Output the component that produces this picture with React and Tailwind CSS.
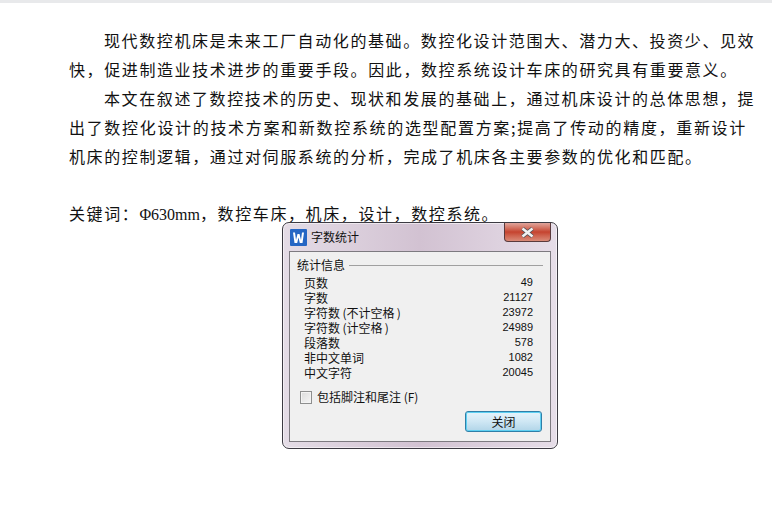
import React from "react";

const stats = [
  ["页数", "49"],
  ["字数", "21127"],
  ["字符数\u2009(不计空格\u2009)", "23972"],
  ["字符数\u2009(计空格\u2009)", "24989"],
  ["段落数", "578"],
  ["非中文单词", "1082"],
  ["中文字符", "20045"],
];

const cjk = { fontFamily: '"Noto Sans CJK SC", "Noto Sans", sans-serif' };

const WordCountDialog = () => {
  return (
    <div
      style={cjk}
      className="absolute left-[282px] top-[222px] w-[276px] h-[227px] rounded-[7px] border border-[#3c3a42] bg-gradient-to-r from-[#e4dce6] via-[#d2c2d2] to-[#e6dde8] flex flex-col px-[6px] pb-[6px] shadow-[inset_0_0_0_1px_rgba(255,255,255,0.55)]"
    >
      <div className="h-[28px] shrink-0 flex items-start">
        <svg width="17" height="17" viewBox="0 0 17 17" className="ml-[1px] mt-[6px]">
          <rect width="17" height="17" rx="1" fill="#2566c4" />
          <polygon
            points="3,3.5 5,3.5 6,11 7.5,5 9.5,5 11,11 12,3.5 14,3.5 12.5,14 9.8,14 8.5,8.5 7.2,14 4.5,14"
            fill="#ffffff"
          />
        </svg>
        <span className="ml-[4px] mt-[5px] text-[12px] leading-[17px] text-[#111]">字数统计</span>
        <button className="ml-auto w-[47px] h-[19px] rounded-b-[4px] border border-t-0 border-[#5a3a3c] bg-gradient-to-b from-[#dfa59c] via-[#c5432f] to-[#d98a78] flex items-center justify-center">
          <svg width="15" height="11" viewBox="0 0 15 11">
            <path d="M2.5 1.5 L12.5 9.5 M12.5 1.5 L2.5 9.5" stroke="#4c5058" strokeWidth="4" />
            <path d="M2.5 1.5 L12.5 9.5 M12.5 1.5 L2.5 9.5" stroke="#f2f2f2" strokeWidth="2.6" />
          </svg>
        </button>
      </div>

      <div className="flex-1 border border-[#7d7a80] bg-[#f0f0f0] pt-[5px] pl-[7px] pr-[6px] flex flex-col">
        <div className="flex items-center h-[16px]">
          <span className="text-[12px] leading-[16px] text-[#111]">统计信息</span>
          <div className="flex-1 h-[1px] ml-[4px] mr-[1px] bg-[#a0a0a0]" />
        </div>
        <div className="mt-[2px] pl-[7px] pr-[11px]">
          {stats.map(([label, value]) => (
            <div key={label} className="flex justify-between items-center h-[15px] text-[12px] leading-[15px] text-[#111]">
              <span>{label}</span>
              <span className="text-[11px]" style={{ fontFamily: '"Liberation Sans", sans-serif' }}>
                {value}
              </span>
            </div>
          ))}
        </div>
        <label className="flex items-center mt-[10px] ml-[3px] h-[14px]">
          <span className="w-[12px] h-[13px] border border-[#8e8f8f] bg-gradient-to-br from-[#dcdcdc] to-[#f6f6f6] shadow-[inset_0_0_0_1px_#f4f4f4]" />
          <span className="ml-[5px] text-[12px] leading-[14px] text-[#111]">包括脚注和尾注 (F)</span>
        </label>
        <div className="flex justify-end mt-[7px] mr-[2px]">
          <button className="w-[77px] h-[21px] rounded-[3px] border border-[#2f7fa8] bg-gradient-to-b from-[#e6f4fb] via-[#cfe7f4] to-[#b1d5e8] text-[12px] leading-[17px] text-[#111] shadow-[inset_0_0_0_1px_#5ed0f2]">
            关闭
          </button>
        </div>
      </div>
    </div>
  );
};

export default function App() {
  return (
    <div style={cjk} className="relative w-[772px] h-[514px] overflow-hidden bg-white text-[#111]">
      <div className="h-[3px] bg-[#e8e9eb]" />
      <div className="pl-[69px] pr-[15px] pt-[23px] text-[16px] leading-[29px] tracking-[1.6px] whitespace-nowrap">
        <p className="pl-[35px]">现代数控机床是未来工厂自动化的基础。数控化设计范围大、潜力大、投资少、见效</p>
        <p>快，促进制造业技术进步的重要手段。因此，数控系统设计车床的研究具有重要意义。</p>
        <p className="pl-[35px]">本文在叙述了数控技术的历史、现状和发展的基础上，通过机床设计的总体思想，提</p>
        <p className="tracking-[1.68px]">出了数控化设计的技术方案和新数控系统的选型配置方案;提高了传动的精度，重新设计</p>
        <p>机床的控制逻辑，通过对伺服系统的分析，完成了机床各主要参数的优化和匹配。</p>
        <p className="mt-[28px]">
          关键词：
          <span className="tracking-normal" style={{ fontFamily: '"Liberation Serif", serif' }}>
            Φ630mm
          </span>
          ，数控车床，机床，设计，数控系统。
        </p>
      </div>
      <WordCountDialog />
    </div>
  );
}
